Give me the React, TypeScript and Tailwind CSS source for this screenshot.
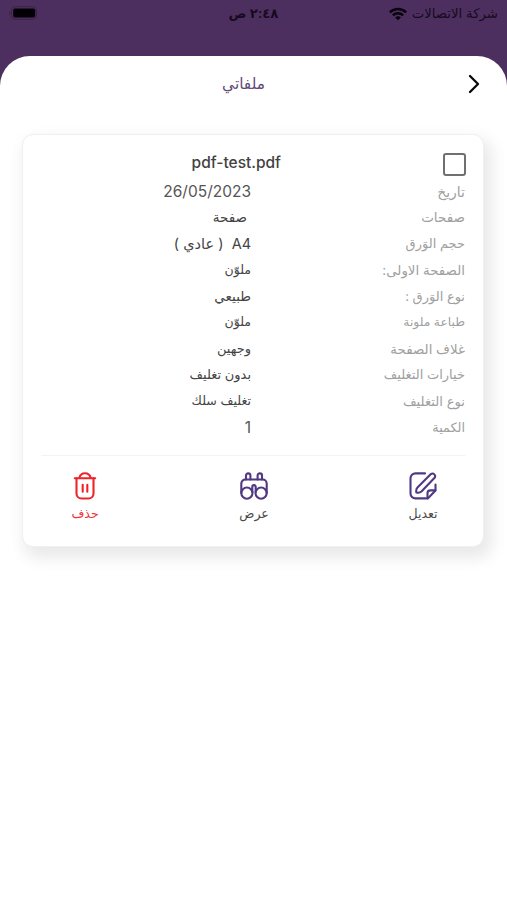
const details = [
  { label: 'تاريخ', value: '26/05/2023', labelSize: 'text-[14px]', valueSize: 'text-[15.5px] text-[#555555]' },
  { label: 'صفحات', value: 'صفحة', labelSize: 'text-[13.5px]', valueSize: 'text-[13.5px] pr-[4px]' },
  { label: 'حجم الوَرق', value: 'A4  ( عادي )', labelSize: 'text-[13px]', valueSize: 'text-[14.5px]' },
  { label: 'الصفحة الاولى:', value: 'ملوّن', labelSize: 'text-[13.4px]', valueSize: 'text-[12.5px]' },
  { label: 'نوع الوَرق :', value: 'طبيعي', labelSize: 'text-[13px]', valueSize: 'text-[13.5px]' },
  { label: 'طباعة ملونة', value: 'ملوّن', labelSize: 'text-[12.3px]', valueSize: 'text-[12.5px]' },
  { label: 'غلاف الصفحة', value: 'وجهين', labelSize: 'text-[13.4px]', valueSize: 'text-[13px]' },
  { label: 'خيارات التغليف', value: 'بدون تغليف', labelSize: 'text-[13px]', valueSize: 'text-[13px]' },
  { label: 'نوع التغليف', value: 'تغليف سلك', labelSize: 'text-[13.2px]', valueSize: 'text-[12.6px]' },
  { label: 'الكمية', value: '1', labelSize: 'text-[12.8px]', valueSize: 'text-[15.5px] text-[#555555]' },
]

function WifiIcon() {
  return (
    <svg width="20" height="14" viewBox="0 0 20 15" fill="none" stroke="#08030c" strokeWidth="2.7">
      <path d="M1.3 5.7a12.6 12.6 0 0 1 17.4 0" />
      <path d="M4.5 9a8 8 0 0 1 11 0" />
      <path d="M10 14.2 6.9 11.2a4.6 4.6 0 0 1 6.2 0Z" fill="#08030c" stroke="none" />
    </svg>
  )
}

function BatteryIcon() {
  return (
    <svg width="30" height="14" viewBox="0 0 30 14">
      <rect x="2.5" y="0.7" width="25" height="12.6" rx="3.5" fill="none" stroke="#3c2249" />
      <rect x="4.2" y="2.4" width="22" height="9.2" rx="1.8" fill="#030005" />
      <path d="M1.3 4.8v4.4C.5 8.6 0 7.9 0 7s.3-1.6 1.3-2.2Z" fill="#3c2249" />
    </svg>
  )
}

function EditIcon() {
  return (
    <svg width="28" height="28" viewBox="0 0 28 28" fill="none" stroke="#503982" strokeWidth="2.1" strokeLinecap="round" strokeLinejoin="round">
      <path d="M16 1.4H6.5a5 5 0 0 0-5 5v15a5 5 0 0 0 5 5h12.3l7.7-7.8V12.5" />
      <path d="M18.5 26.2v-5a2.8 2.8 0 0 1 2.8-2.8h5" />
      <path d="M7.4 20.6c-.5-2.1-.1-3.9 1.3-5.3L21.9 2.1c2.5-1.7 5.4 1.2 3.7 3.7L12.7 19.3c-1.4 1.4-3.2 1.8-5.3 1.3Z" />
    </svg>
  )
}

function BinocularsIcon() {
  return (
    <svg width="28" height="28" viewBox="0 0 28 28" fill="none" stroke="#503982" strokeWidth="2.1" strokeLinecap="round" strokeLinejoin="round">
      <circle cx="6.9" cy="21.1" r="5.6" />
      <circle cx="21.1" cy="21.1" r="5.6" />
      <path d="M1.3 21V11.5a4 4 0 0 1 4-4h17.4a4 4 0 0 1 4 4V21" />
      <path d="M12.3 20v-5.2a1.7 1.7 0 0 1 3.4 0V20" />
      <path d="M6 7.5V3.6a2.2 2.2 0 0 1 4.4 0v3.9M17.6 7.5V3.6a2.2 2.2 0 0 1 4.4 0v3.9" />
    </svg>
  )
}

function TrashIcon() {
  return (
    <svg width="24" height="28" viewBox="0 0 24 28" fill="none" stroke="#ee2428" strokeWidth="2.1" strokeLinecap="round" strokeLinejoin="round">
      <path d="M1.8 6.2h20.4M6.3 6c.7-3 2.8-4.7 5.7-4.7S17 3 17.7 6" />
      <path d="M3.5 6.2v15.3a5 5 0 0 0 5 5h7a5 5 0 0 0 5-5V6.2" />
      <path d="M9.7 12.8v7M14.3 12.8v7" />
    </svg>
  )
}

export default function App() {
  return (
    <div dir="rtl" className="h-[900px] w-[507px] overflow-hidden bg-[#4d2f5f] font-['Inter','DejaVu_Sans',sans-serif]">
      <div className="grid h-14 grid-cols-3 px-[9px] text-[13.3px] text-[#160a1d]">
        <div className="flex h-[27px] items-center gap-[4px] whitespace-nowrap">
          <span>شركة الاتصالات</span>
          <WifiIcon />
        </div>
        <div className="flex h-7 items-center justify-center font-semibold">٢:٤٨ ص</div>
        <div className="flex h-[26px] items-center justify-end">
          <BatteryIcon />
        </div>
      </div>

      <main className="h-[844px] rounded-t-[30px] bg-white px-[23px]">
        <header className="flex h-[78px] items-start pt-[18px]">
          <svg className="mr-[3px]" width="14" height="20" viewBox="0 0 14 20" fill="none" stroke="#08080a" strokeWidth="2.3" strokeLinecap="round" strokeLinejoin="round">
            <path d="m3 2 8 8-8 8" />
          </svg>
          <h1 className="mr-[202px] text-[15.4px] leading-5 text-[#624a77]">ملفاتي</h1>
        </header>

        <section className="h-[413px] w-[462px] rounded-[11px] border border-[#f0f0f0] bg-white px-[18px] shadow-[5px_8px_16px_3px_rgba(0,0,0,0.09)]">
          <div className="flex h-[43px] items-start pt-[18px]">
            <div className="-mr-px size-[23px] rounded-[3px] border-2 border-[#707070]" />
            <div dir="ltr" className="mr-[162px] text-[15.5px] font-medium leading-5 text-[#424242]">pdf-test.pdf</div>
          </div>
          <dl className="h-[277px]">
            {details.map((row) => (
              <div key={row.label} className="flex h-[26.3px] items-center whitespace-pre text-[#444444]">
                <dt className={`w-[214px] text-[#a0a0a0] ${row.labelSize}`}>{row.label}</dt>
                <dd className={row.valueSize}>{row.value}</dd>
              </div>
            ))}
          </dl>
          <div className="flex justify-between border-t border-[#f3f3f3] pl-[24px] pr-[22px] pt-[16px] text-[12.5px] text-[#4b4b4b]">
            <button className="flex w-10 flex-col items-center gap-[5px]">
              <EditIcon />
              <span>تعديل</span>
            </button>
            <button className="flex w-10 flex-col items-center gap-[5px]">
              <BinocularsIcon />
              <span>عرض</span>
            </button>
            <button className="flex w-10 flex-col items-center gap-[5px] text-[#ee3438]">
              <TrashIcon />
              <span>حذف</span>
            </button>
          </div>
        </section>
      </main>
    </div>
  )
}
